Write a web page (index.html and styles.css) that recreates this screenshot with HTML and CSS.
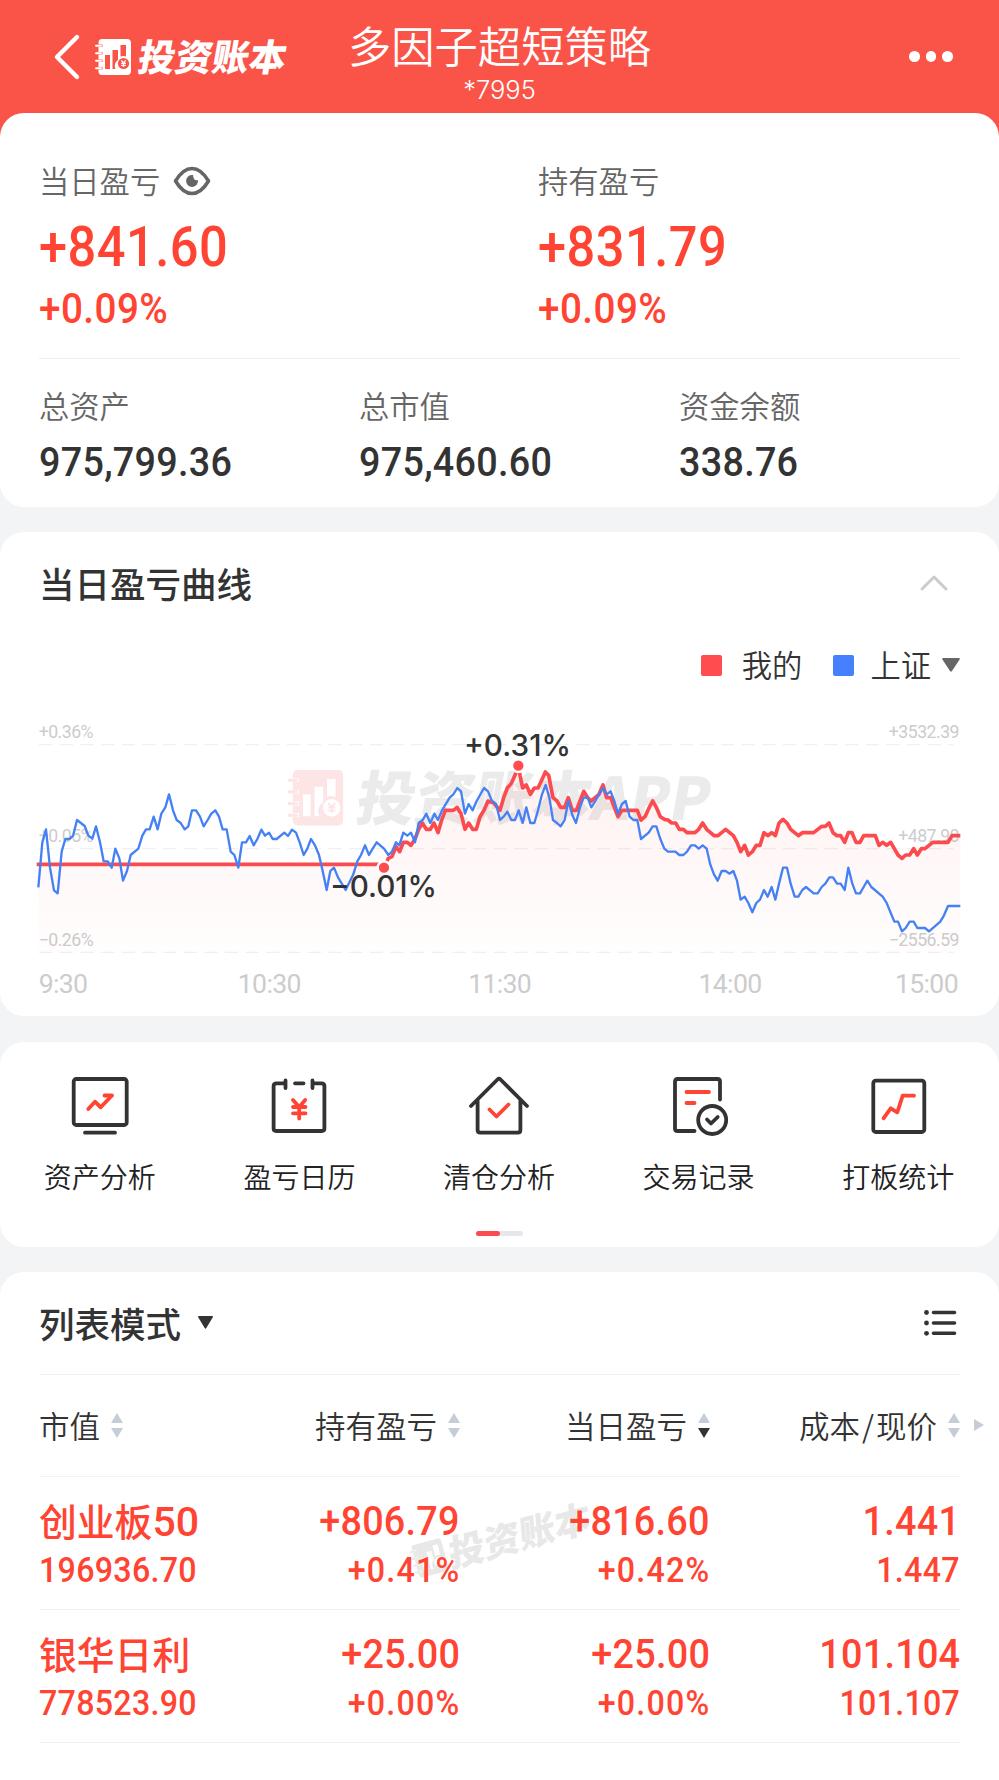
FILE: index.html
```html
<!DOCTYPE html>
<html lang="zh-CN">
<head>
<meta charset="utf-8">
<title>投资账本 - 多因子超短策略</title>
<link rel="stylesheet" href="styles.css">
</head>
<body>

<!-- shared logo -->
<svg class="defs" width="0" height="0">
  <symbol id="logo" viewBox="0 0 36 36">
    <path fill="currentColor" fill-rule="evenodd" d="M7 0H32Q36 0 36 4V32Q36 36 32 36H7Q3.500 36 3.500 32V30.500H7.500V28H3.500V23H7.500V20.500H3.500V15.500H7.500V13H3.500V8H7.500V5.500H3.500V4Q3.500 0 7 0ZM10 16V30H15V16ZM17.500 11V30H20.500A7 7 0 0 1 23 21V11ZM25.500 6V17.500A7 7 0 0 1 31 17.500V6Z"/>
    <path stroke="currentColor" stroke-width="2" stroke-linecap="round" d="M1 6.800H6M1 14.300H6M1 21.800H6M1 29.300H6"/>
    <circle class="coin" cx="28.500" cy="24.500" r="5.600"/>
    <path stroke="currentColor" stroke-width="1.200" fill="none" d="M26.300 21.300L28.500 24L30.700 21.300M28.500 24V28M26.200 24.300H30.800M26.200 26.300H30.800"/>
  </symbol>
</svg>

<header class="topbar">
  <div class="brand">
    <svg class="back" width="26" height="46" viewBox="0 0 26 46"><path d="M23 3L3 23L23 43"/></svg>
    <svg class="brand-logo" width="36" height="36"><use href="#logo"/></svg>
    <span class="brand-name">投资账本</span>
  </div>
  <div class="account">
    <h1>多因子超短策略</h1>
    <p>*7995</p>
  </div>
  <div class="more"><i></i><i></i><i></i></div>
</header>

<!-- 盈亏汇总 -->
<div class="hero">
<section class="card summary">
  <div class="profit">
    <div>
      <div class="label">当日盈亏
        <svg class="eye" width="38" height="30" viewBox="0 0 38 30">
          <path d="M2.500 15Q10 2.500 19 2.500T35.500 15Q28 27.500 19 27.500T2.500 15Z" fill="none" stroke="#666" stroke-width="3.600" stroke-linejoin="round"/>
          <path d="M20 9A6 6 0 1 0 25 14Q20.500 15.500 20 9Z" fill="#666"/>
        </svg>
      </div>
      <div class="big num">+841.60</div>
      <div class="pct num">+0.09%</div>
    </div>
    <div>
      <div class="label">持有盈亏</div>
      <div class="big num">+831.79</div>
      <div class="pct num">+0.09%</div>
    </div>
  </div>
  <div class="assets">
    <div><div class="label">总资产</div><div class="amount num">975,799.36</div></div>
    <div><div class="label">总市值</div><div class="amount num">975,460.60</div></div>
    <div><div class="label">资金余额</div><div class="amount num">338.76</div></div>
  </div>
</section>
</div>

<!-- 当日盈亏曲线 -->
<section class="card curve">
  <div class="card-head">
    <h2>当日盈亏曲线</h2>
    <svg class="fold" width="28" height="16" viewBox="0 0 28 16"><path d="M2 14L14 2L26 14"/></svg>
  </div>
  <div class="legend">
    <span class="dot mine"></span><span>我的</span>
    <span class="dot index"></span><span>上证</span>
    <svg class="caret" width="18" height="14" viewBox="0 0 18 14"><path d="M1 0H17Q18.500 0 17.600 1.500L10 13Q9 14.500 8 13L.4 1.500Q-.5 0 1 0Z"/></svg>
  </div>
  <!-- 3 units = 1px -->
  <svg class="chart" width="921" height="310" viewBox="57 0 2763 930">
    <defs>
      <linearGradient id="area" x1="0" y1="200" x2="0" y2="757" gradientUnits="userSpaceOnUse">
        <stop offset="0" stop-color="#ff4d4f" stop-opacity=".08"/>
        <stop offset="1" stop-color="#ff4d4f" stop-opacity=".01"/>
      </linearGradient>
    </defs>
    <g class="mark">
      <svg class="mark-logo" x="802" y="209" width="168" height="168"><use href="#logo"/></svg>
      <text transform="translate(1001 361) skewX(-10)" textLength="1062">投资账本APP</text>
    </g>
    <g class="grid">
      <path d="M57 134H2800M57 446H2800M57 757H2800"/>
    </g>
    <g class="axis">
      <text x="56" y="115">+0.36%</text>
      <text x="56" y="426">+0.05%</text>
      <text x="56" y="737">−0.26%</text>
      <text class="end" x="2817" y="115">+3532.39</text>
      <text class="end" x="2817" y="426">+487.90</text>
      <text class="end" x="2817" y="737">−2556.59</text>
    </g>
    <path class="area" d="M55 493H1080L1092 503L1105 475L1150 427L1173 436L1207 369L1231 388L1254 398L1276 331L1311 322L1335 388L1369 388L1404 303L1440 331L1462 264L1495 197L1508 264L1531 283L1554 264L1576 216L1599 293L1622 322L1645 293L1669 331L1691 274L1714 303L1749 255L1794 350L1852 331L1863 360L1898 303L1933 360L1978 388L2025 398L2048 369L2094 407L2117 388L2162 455L2185 465L2220 436L2232 398L2266 407L2289 358L2335 407L2427 369L2474 427L2496 398L2508 427L2531 407L2566 407L2577 436L2612 427L2646 475L2692 465L2738 427L2784 427L2821 407V757H55Z"/>
    <polyline class="line-mine" points="50,493 1080,493 1092,503 1105,475 1116,470 1128,440 1139,455 1150,427 1162,427 1173,436 1185,417 1196,388 1207,369 1219,388 1231,388 1242,369 1254,398 1265,360 1276,331 1300,331 1311,322 1323,341 1335,388 1346,369 1358,388 1369,388 1380,350 1392,331 1404,303 1420,308 1440,331 1451,293 1462,264 1474,250 1485,226 1495,197 1500,226 1508,264 1519,255 1531,283 1543,264 1554,264 1565,241 1576,216 1586,226 1599,293 1611,303 1622,322 1634,322 1645,293 1657,331 1669,331 1680,303 1691,274 1703,293 1714,303 1737,283 1749,255 1760,293 1772,293 1783,322 1794,350 1806,331 1852,331 1863,360 1875,350 1886,326 1898,303 1909,322 1921,350 1933,358 1944,360 1955,369 1967,369 1978,388 1990,388 2001,398 2025,398 2036,388 2048,369 2060,388 2082,407 2094,407 2117,388 2140,407 2151,427 2162,455 2174,436 2185,465 2197,455 2209,436 2220,436 2232,398 2243,407 2255,398 2266,407 2277,369 2289,358 2301,369 2312,388 2335,407 2347,398 2381,398 2405,379 2416,379 2427,369 2439,398 2451,407 2462,407 2474,427 2485,398 2496,398 2508,427 2520,427 2531,407 2566,407 2577,436 2588,427 2600,436 2612,427 2623,446 2634,465 2646,475 2657,465 2669,465 2681,446 2692,465 2704,446 2715,446 2738,427 2784,427 2796,407 2821,407"/>
    <polyline class="line-index" points="55,562 67,427 78,388 90,503 102,571 113,580 125,455 136,417 148,417 159,408 171,360 194,378 205,407 217,416 228,379 240,427 251,484 263,484 275,503 286,446 298,475 309,542 321,513 332,465 355,446 367,407 378,388 389,388 401,350 413,388 424,341 436,322 447,283 459,331 470,360 482,369 494,388 505,379 516,331 528,331 540,350 551,379 563,360 574,341 586,331 597,350 608,388 620,388 632,455 643,465 655,503 666,427 678,427 689,408 701,436 712,417 724,389 735,407 747,398 758,417 770,417 793,398 804,408 816,389 828,398 839,427 851,465 862,446 873,417 885,436 897,465 908,513 920,570 931,513 942,503 954,532 977,570 1000,523 1012,484 1023,465 1035,436 1047,465 1058,446 1070,427 1092,446 1105,465 1116,455 1128,427 1138,436 1150,398 1162,407 1173,398 1185,427 1196,369 1208,360 1219,341 1231,369 1243,341 1254,360 1266,331 1289,293 1300,283 1312,264 1323,274 1335,341 1346,312 1358,331 1370,303 1392,264 1404,274 1416,303 1428,312 1440,360 1451,350 1462,335 1474,360 1485,360 1496,331 1508,369 1519,322 1531,369 1543,369 1554,331 1566,283 1577,255 1588,293 1599,360 1611,369 1622,379 1634,360 1645,303 1657,345 1668,369 1680,322 1691,293 1703,293 1714,322 1726,303 1737,283 1749,264 1760,283 1772,274 1783,303 1794,341 1806,312 1817,303 1829,350 1840,360 1852,360 1863,417 1886,398 1898,379 1909,379 1921,417 1933,446 1944,455 1966,455 1978,465 1990,465 2001,455 2013,436 2025,436 2036,446 2048,436 2060,446 2071,494 2082,523 2093,542 2105,513 2117,513 2128,521 2140,513 2151,542 2162,599 2174,590 2185,609 2197,637 2209,609 2220,599 2232,570 2243,590 2255,561 2266,599 2277,551 2289,503 2301,503 2312,551 2324,590 2335,590 2347,570 2358,561 2381,580 2393,580 2405,561 2416,551 2428,532 2439,532 2451,551 2462,551 2474,570 2485,503 2497,551 2508,580 2520,580 2531,561 2542,542 2554,561 2588,590 2600,609 2623,665 2634,665 2646,694 2657,684 2669,665 2681,665 2692,684 2715,684 2727,694 2761,665 2772,646 2784,618 2821,618"/>
    <g class="peak">
      <circle cx="1495" cy="197" r="19"/>
      <circle cx="1092" cy="503" r="19"/>
      <text x="1332" y="167" textLength="321">+0.31%</text>
      <text x="930" y="590" textLength="321">−0.01%</text>
    </g>
    <g class="time">
      <text x="56" y="878">9:30</text>
      <text x="748" y="878" text-anchor="middle">10:30</text>
      <text x="1439" y="878" text-anchor="middle">11:30</text>
      <text x="2130" y="878" text-anchor="middle">14:00</text>
      <text class="end" x="2814" y="878">15:00</text>
    </g>
  </svg>
</section>

<!-- 功能入口 -->
<section class="card tools">
  <div class="tool-list">
    <div class="tool">
      <svg width="60" height="60" viewBox="0 0 60 60">
        <rect x="3.700" y="4" width="53" height="46" rx="2.500"/><path d="M15 57.700H45"/>
        <path class="hot" d="M18.300 34L25 26.700L30.700 32.300L42 20.500M34.500 20.500H42"/>
      </svg>
      <span>资产分析</span>
    </div>
    <div class="tool">
      <svg width="60" height="60" viewBox="0 0 60 60">
        <path d="M16.500 8.300H7.500Q4.600 8.300 4.600 11V53.500Q4.600 56 7.200 56H52.800Q55.400 56 55.400 53.500V11Q55.400 8.300 52.500 8.300H43.500M16.500 5.500V13M43.500 5.500V13M26 8.300H34.500"/>
        <path class="hot" d="M24 25L30.200 32L36.200 25M30.200 32V43.500M24 32H36.500M24 38.300H36.500"/>
      </svg>
      <span>盈亏日历</span>
    </div>
    <div class="tool">
      <svg width="60" height="60" viewBox="0 0 60 60">
        <path d="M2 31L28.500 4.500Q30 3 31.500 4.500L58 31M8.600 25.500V55Q8.600 57.600 11.200 57.600H48.800Q51.400 57.600 51.400 55V25.500"/>
        <path class="hot" d="M20.500 34.500L27.500 41.500L39.500 29.500"/>
      </svg>
      <span>清仓分析</span>
    </div>
    <div class="tool">
      <svg width="60" height="60" viewBox="0 0 60 60">
        <path d="M51 24.500V6.600Q51 4 48.500 4H8.600Q6 4 6 6.600V53.400Q6 56 8.600 56H25.500"/>
        <circle cx="43.200" cy="45" r="14"/><path d="M38 44.500L42 48.500L48.700 42"/>
        <path class="hot" d="M17.500 17H40M17.500 28H25.500"/>
      </svg>
      <span>交易记录</span>
    </div>
    <div class="tool">
      <svg width="60" height="60" viewBox="0 0 60 60">
        <rect x="5.300" y="5.700" width="51" height="51.300" rx="2.500"/>
        <path class="hot" d="M15.500 43.300L22.700 33.300L29.300 37.300L34.700 20.700H46"/>
      </svg>
      <span>打板统计</span>
    </div>
  </div>
  <div class="pager"><i></i></div>
</section>

<!-- 持仓列表 -->
<section class="card holdings">
  <div class="list-head">
    <h2>列表模式</h2>
    <svg class="caret dark" width="15" height="13" viewBox="0 0 18 14" preserveAspectRatio="none"><path d="M1 0H17Q18.500 0 17.600 1.500L10 13Q9 14.500 8 13L.4 1.500Q-.5 0 1 0Z"/></svg>
    <svg class="mode" width="32" height="26" viewBox="0 0 32 26">
      <path d="M9.500 2.500H30.500M9.500 13H30.500M9.500 23.300H30.500"/>
      <circle cx="2.500" cy="2.500" r="2.400"/><circle cx="2.500" cy="13" r="2.400"/><circle cx="2.500" cy="23.300" r="2.400"/>
    </svg>
  </div>
  <div class="row cols">
    <div>市值<span class="sort"><i class="up"></i><i class="down"></i></span></div>
    <div>持有盈亏<span class="sort"><i class="up"></i><i class="down"></i></span></div>
    <div>当日盈亏<span class="sort"><i class="up"></i><i class="down active"></i></span></div>
    <div>成本<span class="slash">/</span>现价<span class="sort"><i class="up"></i><i class="down"></i></span><i class="next"></i></div>
  </div>
  <div class="row item">
    <div class="stamp"><svg width="34" height="34"><use href="#logo"/></svg><span>投资账本</span></div>
    <div class="first"><b class="name">创业板<em>50</em></b><span class="num">196936.70</span></div>
    <div><b class="num">+806.79</b><span class="num rate">+0.41%</span></div>
    <div><b class="num">+816.60</b><span class="num rate">+0.42%</span></div>
    <div><b class="num">1.441</b><span class="num">1.447</span></div>
  </div>
  <div class="row item">
    <div class="first"><b class="name">银华日利</b><span class="num">778523.90</span></div>
    <div><b class="num">+25.00</b><span class="num rate">+0.00%</span></div>
    <div><b class="num">+25.00</b><span class="num rate">+0.00%</span></div>
    <div><b class="num">101.104</b><span class="num">101.107</span></div>
  </div>
</section>

</body>
</html>
```
FILE: styles.css
```css
*{box-sizing:border-box;margin:0;padding:0}
body{
  width:999px;
  height:1780px;
  overflow:hidden;
  background:#f3f4f6;
  font-family:'Noto Sans CJK SC',sans-serif;
  color:#333;
}
svg{display:block;overflow:visible}
.defs{position:absolute}
/* narrow digits */
.num{
  font-family:Roboto,'Noto Sans CJK SC',sans-serif;
  font-weight:500;
  letter-spacing:.3px;
  transform:scaleX(.92);
  transform-origin:left;
}
.label{display:flex;align-items:center;height:40px;font-size:30.3px;line-height:36px;font-weight:350;color:#666}

/* --------- header --------- */
.topbar{
  display:grid;
  grid-template-columns:1fr 304px 1fr;
  height:113px;
  background:#fa5449;
  color:#fff;
}
.brand{display:flex;align-items:center;padding-left:54px}
.back{fill:none;stroke:#fff;stroke-width:4.4;stroke-linecap:round;stroke-linejoin:round}
.brand-logo{margin-left:15px;--coin:#fa5449}
.coin{fill:var(--coin,#fff)}
.brand-name{margin:0 0 4px 8px;font-size:37px;line-height:40px;font-weight:900;white-space:nowrap;transform:skewX(-10deg)}
.account{text-align:center;white-space:nowrap}
.account h1{margin-top:14px;font-size:43.3px;line-height:60px;font-weight:350}
.account p{margin-top:1px;font-family:Inter,sans-serif;font-size:25.5px;line-height:30px;font-weight:300}
.more{display:flex;gap:6px;justify-content:flex-end;align-items:center;padding-right:46px}
.more i{width:10.600px;height:10.600px;border-radius:50%;background:#fff}

/* --------- cards --------- */
.card{background:#fff;border-radius:24px;margin-bottom:25px;padding:0 39px}
h2{font-size:35.5px;line-height:44px;font-weight:500}
.hero{background:linear-gradient(#fa5449 60px,#f3f4f6 60px)}

.summary{height:394px;padding-top:47px}
.profit{display:grid;grid-template-columns:499px 1fr;height:199px;border-bottom:1.5px solid #eee;color:#ff4433}
.eye{margin:2px 0 0 13px}
.big{margin-top:17px;font-size:55px;line-height:60px;letter-spacing:.5px}
.pct{margin-top:10px;font-size:42px;line-height:44px;letter-spacing:.5px}
.assets{display:grid;grid-template-columns:320px 320px 1fr;padding-top:26px}
.amount{margin-top:15px;font-size:41px;line-height:44px}

/* --------- chart --------- */
.curve{height:484px;margin-bottom:26px;padding-top:29px}
.card-head{display:flex;justify-content:space-between;align-items:center;padding-right:12px}
.fold{fill:none;stroke:#ccc;stroke-width:3;stroke-linecap:round;stroke-linejoin:round}
.legend{display:flex;justify-content:flex-end;align-items:center;height:40px;margin:40px 0 15px;font-size:30.3px;line-height:36px;font-weight:350}
.legend span:not(.dot){margin-top:-3px}
.dot{width:21px;height:21px;border-radius:2px;margin-right:20px}
.mine{background:#ff4d4f}
.index{background:#4580ff;margin:0 16px 0 31px}
.caret{margin-left:11px;fill:#666}
.caret.dark{margin-left:17px;fill:#333}
.mark text{font-size:176px;font-weight:900;fill:#ebebeb}
.mark-logo{color:#fde5e6}
.grid path{fill:none;stroke:#f0f0f0;stroke-width:4;stroke-dasharray:40 22}
.axis,.time{font-family:Roboto,sans-serif;fill:#ccc}
.axis{font-size:53px;letter-spacing:-1.5px}
.time{font-size:80px;letter-spacing:-2px}
.end{text-anchor:end}
.area{fill:url(#area)}
.line-mine,.line-index{fill:none;stroke-linejoin:round}
.line-mine{stroke:#fb4b4f;stroke-width:11}
.line-index{stroke:#4580f5;stroke-width:7}
.peak circle{fill:#ff4d4f;stroke:#fff;stroke-width:7}
.peak text{font-family:Inter,sans-serif;font-size:89px;font-weight:500;fill:#333}

/* --------- tools --------- */
.tools{height:205px;padding:33px 0 0}
.tool-list{display:grid;grid-template-columns:repeat(5,1fr);padding-right:1px}
.tool{display:flex;flex-direction:column;align-items:center;font-size:28px;line-height:36px;font-weight:350;color:#222}
.tool span{margin-top:23px}
.tool svg{fill:none;stroke:#333;stroke-width:3.800;stroke-linecap:round;stroke-linejoin:round}
.tool .hot{stroke:#ff4433}
.pager{width:47px;height:5px;margin:37px auto 0;border-radius:3px;background:#e5e7ec}
.pager i{display:block;width:24px;height:5px;border-radius:3px;background:#fb4b4f}

/* --------- holdings --------- */
.holdings{height:540px;margin:0}
.list-head{display:flex;align-items:center;height:102.500px;border-bottom:1.5px solid #f2f2f2}
.mode{margin:0 4px 0 auto;fill:#333;stroke-linecap:round}
.mode path{stroke:#333;stroke-width:3.600}
.row{position:relative;display:grid;grid-template-columns:171px 250px 250px 1fr;border-bottom:1.5px solid #f2f2f2}
.cols{height:102px;font-size:30.5px;line-height:98px;font-weight:350}
.cols>div{position:relative;display:flex;justify-content:flex-end;align-items:center;white-space:nowrap}
.cols>div:first-child{justify-content:flex-start}
.slash{margin:0 2px}
.sort{display:flex;flex-direction:column;gap:5px;margin-left:11px}
.sort i,.next{border:6.500px solid transparent}
.sort .up{border-top:0;border-bottom:10.500px solid #c5cdd6}
.sort .down{border-bottom:0;border-top:10.500px solid #c5cdd6}
.sort .active{border-top-color:#333}
.next{position:absolute;right:-24px;border-right:0;border-left:10px solid #c5cdd6}
.item{height:133px;padding-top:22px;color:#ff4433}
.item>div:not(.stamp){display:flex;flex-direction:column;align-items:flex-end;white-space:nowrap}
.item>div.first{align-items:flex-start}
.item b{position:relative;font-size:41px;line-height:44px;font-weight:500}
.item .name{margin:-1px 0 1px;font-size:37.800px}
.name em{font-family:Roboto,sans-serif;font-size:41px;line-height:40px;font-style:normal}
.item .num{transform-origin:right}
.item .first .num{transform-origin:left}
.item span.num{position:relative;margin-top:7px;font-size:35px;line-height:42px}
.item span.rate{letter-spacing:1.3px}
.stamp{
  position:absolute;
  left:370px;
  top:40px;
  display:flex;
  align-items:center;
  gap:4px;
  color:#e8e8e8;
  transform:rotate(-15deg);
}
.stamp span{font-size:36.5px;line-height:44px;font-weight:900;transform:skewX(-10deg)}
```
